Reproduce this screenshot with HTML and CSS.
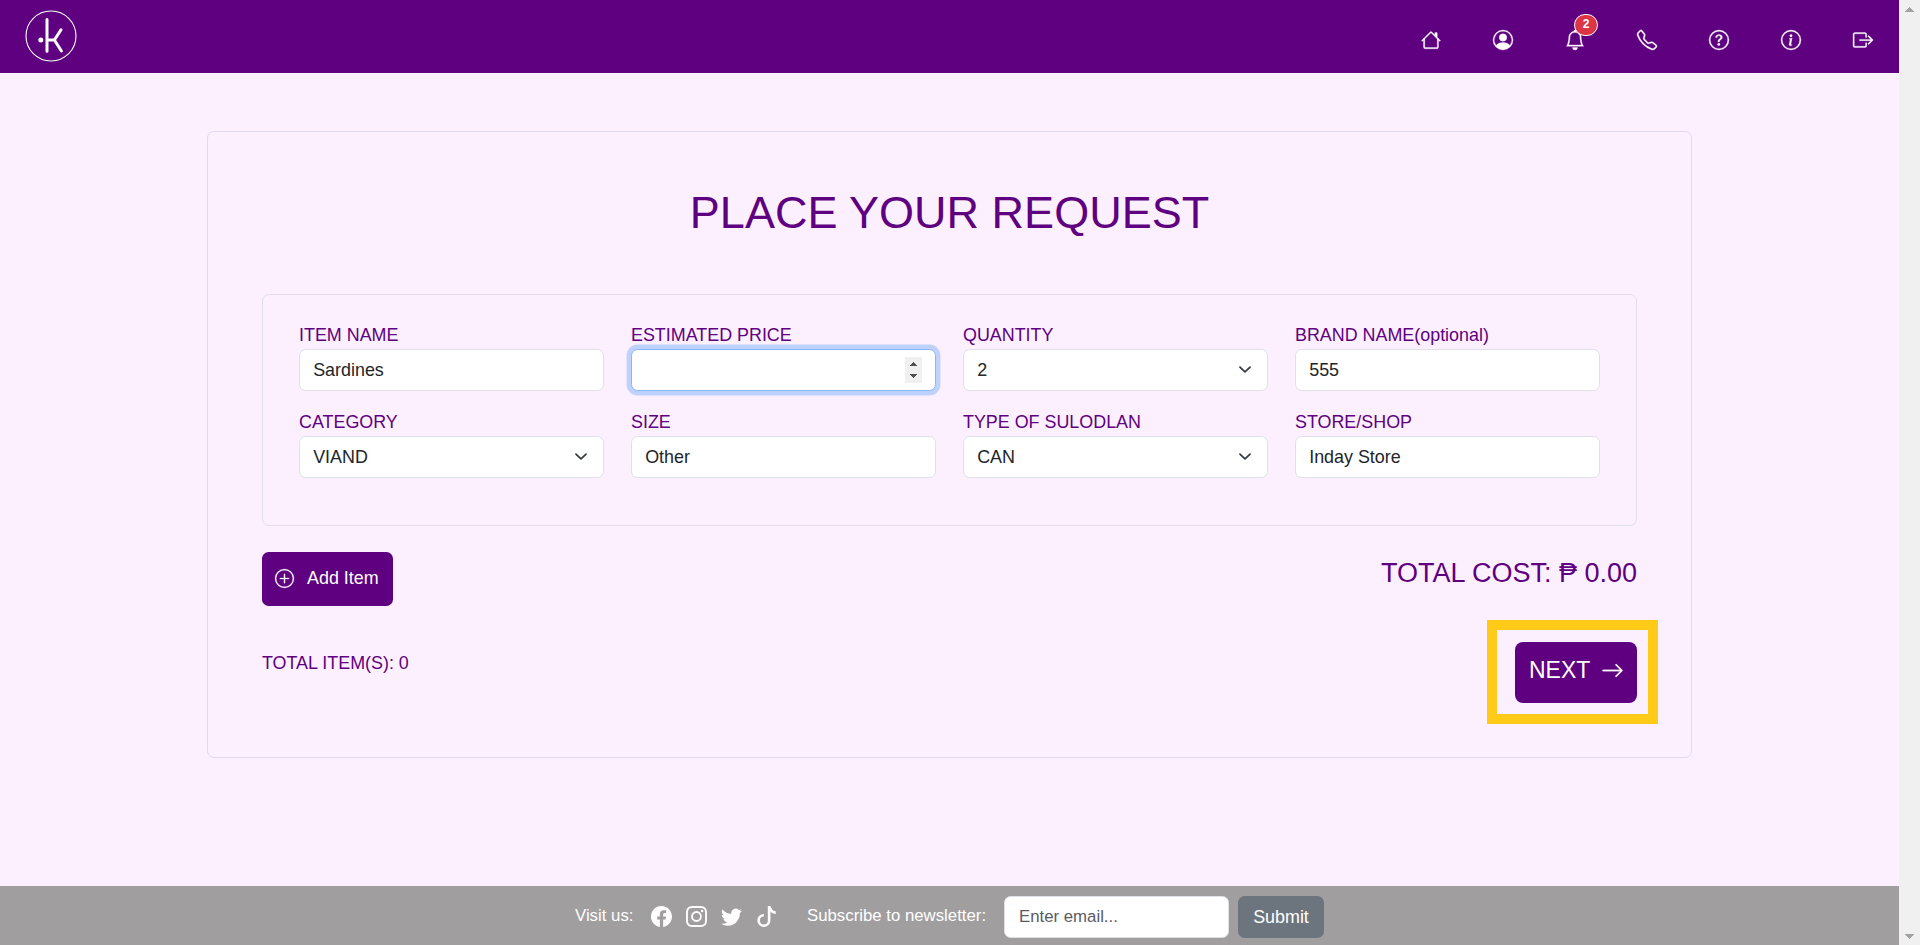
FILE: index.html
```html
<!DOCTYPE html>
<html lang="en">
<head>
<meta charset="utf-8">
<title>Place Your Request</title>
<link rel="stylesheet" href="styles.css">
</head>
<body>
<div class="page">
  <header class="navbar">
    <svg class="logo" viewBox="0 0 52 52" fill="none" stroke="#fff">
      <circle cx="26" cy="26" r="25" stroke-width="1.1"/>
      <path d="M22 9.5V41.2M22 30h6.6M36 19.8L29.4 30L36.4 41" stroke-width="3" stroke-linecap="round" stroke-linejoin="round"/>
      <circle cx="15.8" cy="30" r="2.5" fill="#fff" stroke="none"/>
    </svg>
    <nav class="nav-icons">
      <a class="nav-link"><svg class="icon" viewBox="0 0 16 16"><path d="M2 13.5V7h1v6.5a.5.5 0 0 0 .5.5h9a.5.5 0 0 0 .5-.5V7h1v6.5a1.5 1.5 0 0 1-1.5 1.5h-9A1.5 1.5 0 0 1 2 13.5zm11-11V6l-2-2V2.5a.5.5 0 0 1 .5-.5h1a.5.5 0 0 1 .5.5z"/><path d="M7.293 1.5a1 1 0 0 1 1.414 0l6.647 6.646a.5.5 0 0 1-.708.708L8 2.207 1.354 8.854a.5.5 0 1 1-.708-.708L7.293 1.5z"/></svg></a>
      <a class="nav-link"><svg class="icon" viewBox="0 0 16 16"><path d="M11 6a3 3 0 1 1-6 0 3 3 0 0 1 6 0z"/><path fill-rule="evenodd" d="M0 8a8 8 0 1 1 16 0A8 8 0 0 1 0 8zm8-7a7 7 0 0 0-5.468 11.37C3.242 11.226 4.805 10 8 10s4.757 1.225 5.468 2.37A7 7 0 0 0 8 1z"/></svg></a>
      <a class="nav-link"><svg class="icon" viewBox="0 0 16 16"><path d="M8 16a2 2 0 0 0 2-2H6a2 2 0 0 0 2 2zM8 1.918l-.797.161A4.002 4.002 0 0 0 4 6c0 .628-.134 2.197-.459 3.742-.16.767-.376 1.566-.663 2.258h10.244c-.287-.692-.502-1.49-.663-2.258C12.134 8.197 12 6.628 12 6a4.002 4.002 0 0 0-3.203-3.92L8 1.917zM14.22 12c.223.447.481.801.78 1H1c.299-.199.557-.553.78-1C2.68 10.2 3 6.88 3 6c0-2.42 1.72-4.44 4.005-4.901a1 1 0 1 1 1.99 0A5.002 5.002 0 0 1 13 6c0 .88.32 4.2 1.22 6z"/></svg><span class="badge">2</span></a>
      <a class="nav-link"><svg class="icon" viewBox="0 0 16 16"><path d="M3.654 1.328a.678.678 0 0 0-1.015-.063L1.605 2.3c-.483.484-.661 1.169-.45 1.77a17.568 17.568 0 0 0 4.168 6.608 17.569 17.569 0 0 0 6.608 4.168c.601.211 1.286.033 1.77-.45l1.034-1.034a.678.678 0 0 0-.063-1.015l-2.307-1.794a.678.678 0 0 0-.58-.122l-2.19.547a1.745 1.745 0 0 1-1.657-.459L5.482 8.062a1.745 1.745 0 0 1-.46-1.657l.548-2.19a.678.678 0 0 0-.122-.58L3.654 1.328zM1.884.511a1.745 1.745 0 0 1 2.612.163L6.29 2.98c.329.423.445.974.315 1.494l-.547 2.19a.678.678 0 0 0 .178.643l2.457 2.457a.678.678 0 0 0 .644.178l2.189-.547a1.745 1.745 0 0 1 1.494.315l2.306 1.794c.829.645.905 1.87.163 2.611l-1.034 1.034c-.74.74-1.846 1.065-2.877.702a18.634 18.634 0 0 1-7.01-4.42 18.634 18.634 0 0 1-4.42-7.009c-.362-1.03-.037-2.137.703-2.877L1.885.511z"/></svg></a>
      <a class="nav-link"><svg class="icon" viewBox="0 0 16 16"><path d="M8 15A7 7 0 1 1 8 1a7 7 0 0 1 0 14zm0 1A8 8 0 1 0 8 0a8 8 0 0 0 0 16z"/><path d="M5.255 5.786a.237.237 0 0 0 .241.247h.825c.138 0 .248-.113.266-.25.09-.656.54-1.134 1.342-1.134.686 0 1.314.343 1.314 1.168 0 .635-.374.927-.965 1.371-.673.489-1.206 1.06-1.168 1.987l.003.217a.25.25 0 0 0 .25.246h.811a.25.25 0 0 0 .25-.25v-.105c0-.718.273-.927 1.01-1.486.609-.463 1.244-.977 1.244-2.056 0-1.511-1.276-2.241-2.673-2.241-1.267 0-2.655.59-2.75 2.286zm1.557 5.763c0 .533.425.927 1.01.927.609 0 1.028-.394 1.028-.927 0-.552-.42-.94-1.029-.94-.584 0-1.009.388-1.009.94z"/></svg></a>
      <a class="nav-link"><svg class="icon" viewBox="0 0 16 16"><path d="M8 15A7 7 0 1 1 8 1a7 7 0 0 1 0 14zm0 1A8 8 0 1 0 8 0a8 8 0 0 0 0 16z"/><path d="m8.93 6.588-2.29.287-.082.38.45.083c.294.07.352.176.288.469l-.738 3.468c-.194.897.105 1.319.808 1.319.545 0 1.178-.252 1.465-.598l.088-.416c-.2.176-.492.246-.686.246-.275 0-.375-.193-.304-.533L8.93 6.588zM9 4.5a1 1 0 1 1-2 0 1 1 0 0 1 2 0z"/></svg></a>
      <a class="nav-link"><svg class="icon" viewBox="0 0 16 16"><path fill-rule="evenodd" d="M10 12.5a.5.5 0 0 1-.5.5h-8a.5.5 0 0 1-.5-.5v-9a.5.5 0 0 1 .5-.5h8a.5.5 0 0 1 .5.5v2a.5.5 0 0 0 1 0v-2A1.5 1.5 0 0 0 9.5 2h-8A1.5 1.5 0 0 0 0 3.5v9A1.5 1.5 0 0 0 1.500 14h8a1.500 1.500 0 0 0 1.500-1.500v-2a.5.5 0 0 0-1 0v2z"/><path fill-rule="evenodd" d="M15.854 8.354a.5.5 0 0 0 0-.708l-3-3a.5.5 0 0 0-.708.708L14.293 7.500H5.500a.5.5 0 0 0 0 1h8.793l-2.147 2.146a.5.5 0 0 0 .708.708l3-3z"/></svg></a>
    </nav>
  </header>

  <main class="main">
    <section class="request-card">
      <h1 class="title">PLACE YOUR REQUEST</h1>
      <form class="item-card">
        <label class="field"><span class="label">ITEM NAME</span><input class="control" type="text" value="Sardines"></label>
        <label class="field"><span class="label">ESTIMATED PRICE</span>
          <span class="control control-focus"><svg class="spinner" viewBox="0 0 17 26" shape-rendering="crispEdges"><path fill="#f0f0f0" d="M0 0h17v26H0z"/><path fill="#505050" d="M5 9h7v-1h-1v-1h-1v-1h-1v-1h-1v1h-1v1h-1v1h-1zM5 17h7v1h-1v1h-1v1h-1v1h-1v-1h-1v-1h-1v-1h-1z"/></svg></span></label>
        <label class="field"><span class="label">QUANTITY</span><select class="control select"><option>2</option></select></label>
        <label class="field"><span class="label">BRAND NAME(optional)</span><input class="control" type="text" value="555"></label>
        <label class="field"><span class="label">CATEGORY</span><select class="control select"><option>VIAND</option></select></label>
        <label class="field"><span class="label">SIZE</span><input class="control" type="text" value="Other"></label>
        <label class="field"><span class="label">TYPE OF SULODLAN</span><select class="control select"><option>CAN</option></select></label>
        <label class="field"><span class="label">STORE/SHOP</span><input class="control" type="text" value="Inday Store"></label>
      </form>
      <div class="summary">
        <div class="summary-left">
          <button class="btn btn-add"><svg class="icon-add" viewBox="0 0 16 16"><path d="M8 15A7 7 0 1 1 8 1a7 7 0 0 1 0 14zm0 1A8 8 0 1 0 8 0a8 8 0 0 0 0 16z"/><path d="M8 4a.5.5 0 0 1 .5.5v3h3a.5.5 0 0 1 0 1h-3v3a.5.5 0 0 1-1 0v-3h-3a.5.5 0 0 1 0-1h3v-3A.5.5 0 0 1 8 4z"/></svg>Add Item</button>
          <p class="total-items">TOTAL ITEM(S): 0</p>
        </div>
        <div class="summary-right">
          <p class="total-cost">TOTAL COST: ₱ 0.00</p>
          <div class="highlight">
            <button class="btn btn-next">NEXT<svg class="icon-next" viewBox="0 0 16 16"><path fill-rule="evenodd" d="M1 8a.5.5 0 0 1 .5-.5h11.793l-3.147-3.146a.5.5 0 0 1 .708-.708l4 4a.5.5 0 0 1 0 .708l-4 4a.5.5 0 0 1-.708-.708L13.293 8.500H1.500A.5.5 0 0 1 1 8z"/></svg></button>
          </div>
        </div>
      </div>
    </section>
  </main>

  <footer class="footer">
    <span class="visit">Visit us:</span>
    <div class="social">
      <svg class="icon-social" viewBox="0 0 16 16"><path d="M16 8.049c0-4.446-3.582-8.050-8-8.050C3.580 0-.002 3.603-.002 8.050c0 4.017 2.926 7.347 6.750 7.951v-5.625h-2.030V8.050H6.750V6.275c0-2.017 1.195-3.131 3.022-3.131.876 0 1.791.157 1.791.157v1.980h-1.009c-.993 0-1.303.621-1.303 1.258v1.510h2.218l-.354 2.326H9.250V16c3.824-.604 6.750-3.934 6.750-7.951z"/></svg>
      <svg class="icon-social" viewBox="0 0 16 16"><path d="M8 0C5.829 0 5.556.01 4.703.048 3.850.088 3.269.222 2.760.420a3.917 3.917 0 0 0-1.417.923A3.927 3.927 0 0 0 .420 2.760C.222 3.268.087 3.850.048 4.700.010 5.555 0 5.827 0 8.001c0 2.172.010 2.444.048 3.297.040.852.174 1.433.372 1.942.205.526.478.972.923 1.417.444.445.890.719 1.416.923.510.198 1.090.333 1.942.372C5.555 15.990 5.827 16 8 16s2.444-.010 3.298-.048c.851-.040 1.434-.174 1.943-.372a3.916 3.916 0 0 0 1.416-.923c.445-.445.718-.891.923-1.417.197-.509.332-1.090.372-1.942C15.990 10.445 16 10.173 16 8s-.010-2.445-.048-3.299c-.040-.851-.175-1.433-.372-1.941a3.926 3.926 0 0 0-.923-1.417A3.911 3.911 0 0 0 13.240.420c-.510-.198-1.092-.333-1.943-.372C10.443.010 10.172 0 7.998 0h.003zm-.717 1.442h.718c2.136 0 2.389.007 3.232.046.780.035 1.204.166 1.486.275.373.145.640.319.920.599.280.280.453.546.598.920.110.281.240.705.275 1.485.039.843.047 1.096.047 3.231s-.008 2.389-.047 3.232c-.035.780-.166 1.203-.275 1.485a2.470 2.470 0 0 1-.599.919c-.280.280-.546.453-.920.598-.280.110-.704.240-1.485.276-.843.038-1.096.047-3.232.047s-2.390-.009-3.233-.047c-.780-.036-1.203-.166-1.485-.276a2.478 2.478 0 0 1-.920-.598 2.480 2.480 0 0 1-.600-.920c-.109-.281-.240-.705-.275-1.485-.038-.843-.046-1.096-.046-3.233 0-2.136.008-2.388.046-3.231.036-.780.166-1.204.276-1.486.145-.373.319-.640.599-.920.280-.280.546-.453.920-.598.282-.110.705-.240 1.485-.276.738-.034 1.024-.044 2.515-.045v.002zm4.988 1.328a.960.960 0 1 0 0 1.920.960.960 0 0 0 0-1.920zm-4.270 1.122a4.109 4.109 0 1 0 0 8.217 4.109 4.109 0 0 0 0-8.217zm0 1.441a2.667 2.667 0 1 1 0 5.334 2.667 2.667 0 0 1 0-5.334z"/></svg>
      <svg class="icon-social" viewBox="0 0 16 16"><path d="M5.026 15c6.038 0 9.341-5.003 9.341-9.334 0-.140 0-.282-.006-.422A6.685 6.685 0 0 0 16 3.542a6.658 6.658 0 0 1-1.889.518 3.301 3.301 0 0 0 1.447-1.817 6.533 6.533 0 0 1-2.087.793A3.286 3.286 0 0 0 7.875 6.030a9.325 9.325 0 0 1-6.767-3.429 3.289 3.289 0 0 0 1.018 4.382A3.323 3.323 0 0 1 .640 6.575v.045a3.288 3.288 0 0 0 2.632 3.218 3.203 3.203 0 0 1-.865.115 3.230 3.230 0 0 1-.614-.057 3.283 3.283 0 0 0 3.067 2.277A6.588 6.588 0 0 1 .780 13.580a6.320 6.320 0 0 1-.780-.045A9.344 9.344 0 0 0 5.026 15z"/></svg>
      <svg class="icon-social" viewBox="0 0 16 16"><path d="M9 0h1.980c.144.715.540 1.617 1.235 2.512C12.895 3.389 13.797 4 15 4v2c-1.753 0-3.070-.814-4-1.829V11a5 5 0 1 1-5-5v2a3 3 0 1 0 3 3V0z"/></svg>
    </div>
    <span class="subscribe">Subscribe to newsletter:</span>
    <input class="control email" type="email" placeholder="Enter email...">
    <button class="btn-submit">Submit</button>
  </footer>
</div>
<aside class="scrollbar">
  <svg class="scroll-arrow" viewBox="0 0 9 5" shape-rendering="crispEdges"><path d="M0 5V4h1V3h1V2h1V1h1V0h1v1h1v1h1v1h1v1h1v1z"/></svg>
  <svg class="scroll-arrow" viewBox="0 0 9 5" shape-rendering="crispEdges"><path d="M0 0v1h1v1h1v1h1v1h1v1h1V4h1V3h1V2h1V1h1V0z"/></svg>
</aside>
</body>
</html>
```
FILE: styles.css
```css
* { box-sizing: border-box; }

body {
  margin: 0;
  height: 945px;
  display: flex;
  overflow: hidden;
  background: #fcf0ff;
  color: #5e007f;
  font-family: "Liberation Sans", Arial, sans-serif;
  font-size: 17.9px;
  line-height: 1.5;
}

.page { flex: 1; display: flex; flex-direction: column; }

.scrollbar {
  width: 21px;
  background: #f0f0f0;
  display: flex;
  flex-direction: column;
  align-items: center;
  justify-content: space-between;
  padding: 7px 0 6px;
}
.scroll-arrow { width: 9px; height: 5px; fill: #a3a3a3; }

.navbar {
  height: 73px;
  background: #5e007f;
  display: flex;
  justify-content: space-between;
  align-items: flex-start;
  padding: 10px 26px 0 25px;
}
.logo { width: 52px; height: 52px; }
.nav-icons { display: flex; gap: 52px; padding-top: 20px; }
.nav-link { position: relative; display: flex; }
.icon { width: 20px; height: 20px; fill: #fff; stroke: #fff; stroke-width: .25; overflow: visible; }
.badge {
  position: absolute;
  left: 9px;
  top: -16px;
  width: 24px;
  height: 22px;
  border: 1px solid #fff;
  border-radius: 11px;
  background: #dc3545;
  color: #fff;
  font-size: 12px;
  font-weight: 700;
  line-height: 19px;
  text-align: center;
}

.main { flex: 1; padding: 58px 207px 0; }
.request-card {
  height: 627px;
  border: 1px solid #e1daee;
  border-radius: 7px;
  padding: 54px 54px 0;
}
.title {
  margin: 0 0 55px;
  height: 53px;
  line-height: 53px;
  text-align: center;
  font-size: 45px;
  font-weight: 400;
}

.item-card {
  height: 232px;
  border: 1px solid #dfdeea;
  border-radius: 7px;
  padding: 27px 36px 0;
  display: grid;
  grid-template-columns: repeat(4, 1fr);
  grid-auto-rows: 87px;
  column-gap: 27px;
}
.field { display: flex; flex-direction: column; }
.label { height: 27px; line-height: 27px; }
.control {
  width: 100%;
  height: 42px;
  margin: 0;
  padding: 0 14px 0 13.2px;
  border: 1px solid #dee2e6;
  border-radius: 6.6px;
  background: #fff;
  color: #212529;
  font: inherit;
}
.control::placeholder { color: #595c5f; opacity: 1; }
.control-focus {
  display: flex;
  align-items: center;
  justify-content: flex-end;
  padding-right: 13px;
  border-color: #86b7fe;
  box-shadow: 0 0 0 4.4px #bfd2fe;
}
.spinner { width: 17px; height: 26px; }
.select {
  appearance: none;
  background: #fff url("data:image/svg+xml,%3Csvg xmlns='http://www.w3.org/2000/svg' viewBox='0 0 16 16'%3E%3Cpath fill='none' stroke='%23343a40' stroke-linecap='round' stroke-linejoin='round' stroke-width='2' d='m2 5 6 6 6-6'/%3E%3C/svg%3E") no-repeat right 13.2px center / 17.6px 13.2px;
}

.summary { display: flex; justify-content: space-between; padding-top: 26px; }
.summary-left { display: flex; flex-direction: column; align-items: flex-start; gap: 44px; }
.summary-right { display: flex; flex-direction: column; align-items: flex-end; }
.btn {
  display: flex;
  align-items: center;
  border: 0;
  border-radius: 6.6px;
  background: #5e007f;
  color: #fff;
  font: inherit;
}
.btn-add { width: 131px; height: 54px; padding: 0 0 2px 13px; gap: 13px; }
.icon-add { width: 19px; height: 19px; fill: #fff; stroke: #fff; stroke-width: .2; overflow: visible; }
.total-items { margin: 0; }
.total-cost { margin: 3px 0 0; height: 36px; line-height: 36px; font-size: 27px; }
.highlight {
  width: 171px;
  height: 104px;
  margin: 29px -21px 0 0;
  border: 10px solid #ffca18;
  padding: 12px 0 0 18px;
}
.btn-next { width: 122px; height: 61px; padding: 0 0 4px 14px; gap: 11px; font-size: 23px; border-radius: 8px; }
.icon-next { width: 23px; height: 23px; fill: #fff; stroke: #fff; stroke-width: .2; }

.footer {
  height: 59px;
  background: #a09e9f;
  color: #fff;
  display: flex;
  align-items: center;
  padding: 1px 0 0 575px;
  font-size: 16.8px;
}
.visit { width: 76px; }
.social { width: 156px; display: flex; gap: 14px; }
.icon-social { width: 21px; height: 21px; fill: #fff; }
.subscribe { width: 197px; white-space: nowrap; }
.email { width: 225px; padding: 0 14px; margin-top: 2px; }
.btn-submit {
  width: 86px;
  height: 42px;
  margin: 2px 0 0 9px;
  padding: 0;
  border: 0;
  border-radius: 6.6px;
  background: #6c757d;
  color: #fff;
  font: inherit;
  font-size: 17.9px;
}
```
